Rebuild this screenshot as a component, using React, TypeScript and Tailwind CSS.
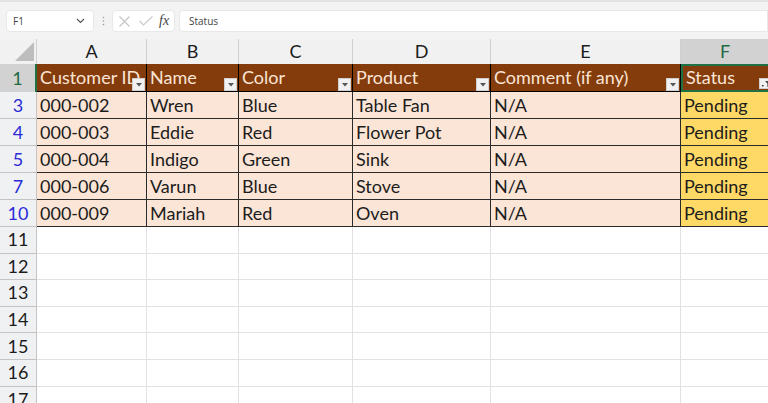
const cols = ["A", "B", "C", "D", "E", "F"];
const widths = ["w-[110px]", "w-[92px]", "w-[114px]", "w-[138px]", "w-[190px]", "w-[94px]"];
const headers = ["Customer ID", "Name", "Color", "Product", "Comment (if any)", "Status"];
const rows = [
  ["3", "000-002", "Wren", "Blue", "Table Fan"],
  ["4", "000-003", "Eddie", "Red", "Flower Pot"],
  ["5", "000-004", "Indigo", "Green", "Sink"],
  ["7", "000-006", "Varun", "Blue", "Stove"],
  ["10", "000-009", "Mariah", "Red", "Oven"],
];
const empties = ["11", "12", "13", "14", "15", "16", "17"];

function FilterButton({ active }: { active?: boolean }) {
  return (
    <span className={`absolute right-px w-[13px] bg-[#f1f1f1] border border-[#d0d0d0] flex items-center justify-center ${active ? "bottom-[1px] h-[11px]" : "bottom-0 h-[13px]"}`}>
      {active ? (
        <svg width="10" height="9" viewBox="0 0 10 9">
          <path d="M4 2h6L7.6 4.6V8H6.4V4.6Z" fill="#444" />
          <path d="M0.5 6h2.5L1.8 8Z" fill="#444" />
        </svg>
      ) : (
        <svg width="8" height="5" viewBox="0 0 8 5">
          <path d="M1 1h6L4 4.4Z" fill="#555" />
        </svg>
      )}
    </span>
  );
}

export default function App() {
  return (
    <div className="w-[768px] h-[403px] overflow-hidden bg-[#f3f3f3] font-['Lato','Liberation_Sans',sans-serif] text-[18px] text-[#1c1c1c]">
      <div className="h-[39px] border-t-2 border-[#e3e3e3] flex items-start pt-2 pl-[6px] font-['Open_Sans','Liberation_Sans',sans-serif]">
        <div className="w-[88px] h-[22px] bg-white rounded border border-[#e8e8e8] flex items-center justify-between pl-[6px] pr-2 text-[10px] text-[#444]">
          <span>F1</span>
          <svg width="9" height="6" viewBox="0 0 9 6" fill="none" stroke="#555" strokeWidth="1.2"><path d="M1 1l3.5 3.5L8 1" /></svg>
        </div>
        <div className="w-[18px] h-[22px] flex items-center justify-center">
          <svg width="3" height="10" viewBox="0 0 3 10" fill="#9a9a9a"><circle cx="1.5" cy="1.5" r=".8" /><circle cx="1.5" cy="5" r=".8" /><circle cx="1.5" cy="8.5" r=".8" /></svg>
        </div>
        <div className="w-[63px] h-[22px] bg-white rounded border border-[#e8e8e8] flex items-center gap-[9px] pl-[6px] mr-1">
          <svg width="11" height="11" viewBox="0 0 11 11" stroke="#c4c4c4" strokeWidth="1.1"><path d="M.5.5l10 10M10.5.5l-10 10" /></svg>
          <svg width="14" height="10" viewBox="0 0 14 10" fill="none" stroke="#c9c9c9" strokeWidth="1.1"><path d="M.5 5l4 4L13.5.5" /></svg>
          <span className="font-['Liberation_Serif',serif] italic text-[14px] leading-none text-[#444] -ml-[3px]">fx</span>
        </div>
        <div className="flex-1 h-[22px] bg-white rounded-l border border-[#e8e8e8] flex items-center pl-[9px] text-[10px] text-[#444]">Status</div>
      </div>

      <div className="flex h-[25px]">
        <div className="w-[37px] shrink-0 relative bg-[#f1f1f1] border-r border-[#d0d0d0]">
          <svg className="absolute right-[2px] bottom-[3px]" width="19" height="19" viewBox="0 0 19 19"><path d="M19 0v19H0Z" fill="#bdbdbd" /></svg>
        </div>
        {cols.map((c, i) => (
          <div key={c} className={`${widths[i]} flex items-center justify-center shrink-0 ${c === "F" ? "bg-[#d2d2d2] text-[#1f6b43] pr-[6px]" : "bg-[#f1f1f1] border-r border-[#d0d0d0]"}`}>{c}</div>
        ))}
      </div>

      <div className="flex h-[28px]">
        <div className="w-[37px] shrink-0 bg-[#d2d2d2] border-r-2 border-[#1f7246] flex items-center justify-center text-[#1f6b43]">1</div>
        {headers.map((h, i) => (
          <div key={h} className={`${widths[i]} relative shrink-0 bg-[#843c0c] text-[#fbe5d6] pl-[3px] pb-px flex items-center whitespace-nowrap overflow-hidden ${i === 5 ? "border-2 border-[#1f7246]" : "border-r border-black border-b"}`}>
            {h}
            <FilterButton active={i === 5} />
          </div>
        ))}
      </div>

      {rows.map((r) => (
        <div key={r[0]} className="flex h-[27px]">
          <div className="w-[37px] shrink-0 bg-[#f0f1f3] border-r border-b border-[#c4c4c4] flex items-center justify-center text-[#2b2bd8]">{r[0]}</div>
          {[r[1], r[2], r[3], r[4], "N/A", "Pending"].map((v, i) => (
            <div key={i} className={`${widths[i]} shrink-0 pl-[3px] flex items-center border-r border-b border-[#2a2a2a] ${i === 5 ? "bg-[#ffd966]" : "bg-[#fbe5d6]"}`}>{v}</div>
          ))}
        </div>
      ))}

      {empties.map((n) => (
        <div key={n} className="flex h-[26.6px]">
          <div className="w-[37px] shrink-0 bg-[#f0f1f3] border-r border-b border-[#c4c4c4] flex items-center justify-center">{n}</div>
          {widths.map((w, i) => (
            <div key={i} className={`${w} shrink-0 bg-white border-r border-b border-[#e2e2e2]`} />
          ))}
        </div>
      ))}
    </div>
  );
}
